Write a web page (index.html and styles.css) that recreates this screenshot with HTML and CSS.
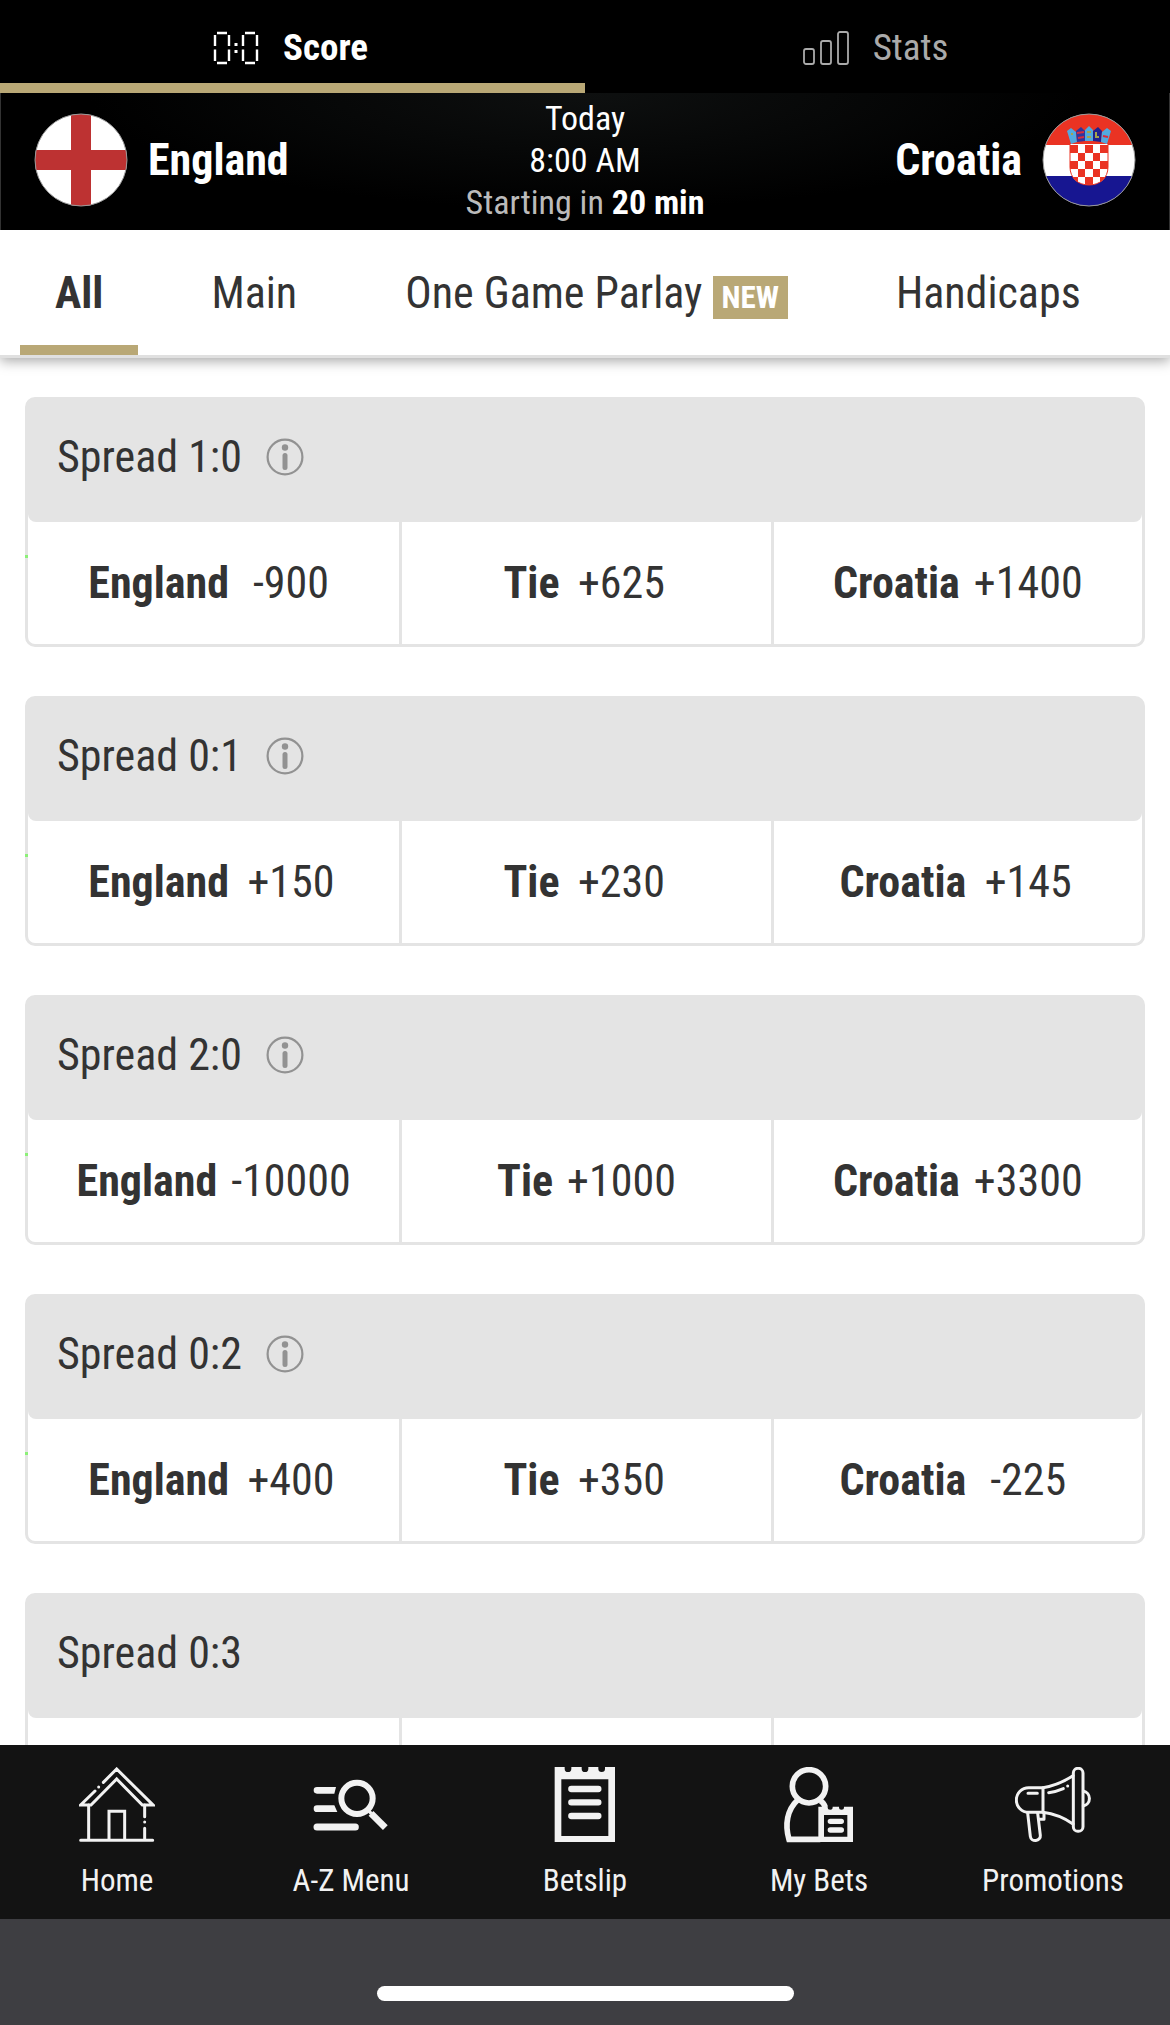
FILE: index.html
```html
<!DOCTYPE html>
<html lang="en">
<head>
    <meta charset="UTF-8">
    <meta name="viewport" content="width=device-width, initial-scale=1.0">
    <title>England - Croatia</title>
    <link rel="stylesheet" href="styles.css">
</head>
<body>
    <!-- shared icons -->
    <svg class="sprite" aria-hidden="true">
        <symbol id="icon-info" viewBox="0 0 38 38">
            <circle cx="19" cy="19" r="17.4" fill="none" stroke="#929292" stroke-width="2.2"/>
            <circle cx="19" cy="9.500" r="3.200" fill="#929292"/>
            <rect x="16.500" y="15" width="5" height="17" rx="2.500" fill="#929292"/>
        </symbol>
    </svg>

    <nav class="view-tabs">
        <button class="view-tab active">
            <svg class="view-icon" viewBox="0 0 46 34" fill="none" stroke="currentColor" stroke-width="2.4">
                <path d="M4 2H14M2 4V15M16 4V15M2 18.500V30M16 18.500V30M4 32H14"/>
                <path d="M32 2H42M30 4V15M44 4V15M30 18.500V30M44 18.500V30M32 32H42"/>
                <path d="M21.500 13.500H24.500M21.500 20.500H24.500" stroke-width="3"/>
            </svg>
            <span>Score</span>
        </button>
        <button class="view-tab">
            <svg class="view-icon" viewBox="0 0 46 34" fill="none" stroke="currentColor" stroke-width="1.8">
                <rect x="1" y="18" width="10" height="15" rx="2"/>
                <rect x="18" y="10" width="10" height="23" rx="2"/>
                <rect x="35" y="1" width="10" height="32" rx="2"/>
            </svg>
            <span>Stats</span>
        </button>
    </nav>

    <header class="match">
        <div class="team">
            <svg class="flag" viewBox="0 0 94 94">
                <clipPath id="flag-round"><circle cx="47" cy="47" r="46"/></clipPath>
                <g clip-path="url(#flag-round)">
                    <rect width="94" height="94" fill="#fff"/>
                    <path d="M37 0H57V37H94V57H57V94H37V57H0V37H37Z" fill="#bd3232"/>
                </g>
                <circle cx="47" cy="47" r="46" fill="none" stroke="#999" stroke-width="1"/>
            </svg>
            <span>England</span>
        </div>
        <div class="kickoff">
            <div>Today</div>
            <div>8:00 AM</div>
            <div class="countdown">Starting in <b>20 min</b></div>
        </div>
        <div class="team away">
            <span>Croatia</span>
            <svg class="flag" viewBox="0 0 94 94">
                <g clip-path="url(#flag-round)">
                    <rect width="94" height="94" fill="#fff"/>
                    <rect width="94" height="32" fill="#ea3323"/>
                    <rect y="63" width="94" height="31" fill="#171691"/>
                    <clipPath id="shield"><path d="M28 31H66V54C66 65 58 72 47 72S28 65 28 54Z"/></clipPath>
                    <g clip-path="url(#shield)">
                        <rect x="28" y="31" width="38" height="42" fill="#fff"/>
                        <path fill="#ea3323" d="M28 32h8v8h-8zM43 32h8v8h-8zM58 32h8v8h-8zM36 40h7v8h-7zM51 40h7v8h-7zM28 48h8v8h-8zM43 48h8v8h-8zM58 48h8v8h-8zM36 56h7v8h-7zM51 56h7v8h-7zM28 64h8v8h-8zM43 64h8v8h-8zM58 64h8v8h-8z"/>
                    </g>
                    <path d="M28 31V54C28 65 36 72 47 72S66 65 66 54V31" fill="none" stroke="#ea3323"/>
                    <path d="M25 18L29 15L34 19L35 29L29 31Z" fill="#52a9df"/>
                    <path d="M34 18L39 14L43 18V28L35 29Z" fill="#31349b"/>
                    <path d="M43 17L47 13L51 17V28H43Z" fill="#52a9df"/>
                    <path d="M51 18L56 14L60 18L59 29L51 28Z" fill="#21218e"/>
                    <path d="M60 19L65 15L69 18L65 31L59 29Z" fill="#52a9df"/>
                    <path d="M35 20L42 19M36 25L42 24M61 23L66 24" stroke="#d92a3c" stroke-width="2"/>
                    <path d="M45 19H49M45 24H49M54 19V24H57M29 21H31" stroke="#a5a34b" stroke-width="2" fill="none"/>
                </g>
                <circle cx="47" cy="47" r="46" fill="none" stroke="#999" stroke-width="1"/>
            </svg>
        </div>
    </header>

    <nav class="market-tabs">
        <button class="market-tab active">All</button>
        <button class="market-tab">Main</button>
        <button class="market-tab">One Game Parlay <span class="badge">NEW</span></button>
        <button class="market-tab">Handicaps</button>
    </nav>

    <main class="markets">
        <section class="market">
            <h2 class="market-head">Spread 1:0 <svg class="info"><use href="#icon-info"/></svg></h2>
            <div class="options">
                <button class="option"><b>England</b><span class="odds">-900</span></button>
                <button class="option"><b>Tie</b><span class="odds">+625</span></button>
                <button class="option"><b>Croatia</b><span class="odds">+1400</span></button>
            </div>
        </section>
        <section class="market">
            <h2 class="market-head">Spread 0:1 <svg class="info"><use href="#icon-info"/></svg></h2>
            <div class="options">
                <button class="option"><b>England</b><span class="odds">+150</span></button>
                <button class="option"><b>Tie</b><span class="odds">+230</span></button>
                <button class="option"><b>Croatia</b><span class="odds">+145</span></button>
            </div>
        </section>
        <section class="market">
            <h2 class="market-head">Spread 2:0 <svg class="info"><use href="#icon-info"/></svg></h2>
            <div class="options">
                <button class="option"><b>England</b><span class="odds">-10000</span></button>
                <button class="option"><b>Tie</b><span class="odds">+1000</span></button>
                <button class="option"><b>Croatia</b><span class="odds">+3300</span></button>
            </div>
        </section>
        <section class="market">
            <h2 class="market-head">Spread 0:2 <svg class="info"><use href="#icon-info"/></svg></h2>
            <div class="options">
                <button class="option"><b>England</b><span class="odds">+400</span></button>
                <button class="option"><b>Tie</b><span class="odds">+350</span></button>
                <button class="option"><b>Croatia</b><span class="odds">-225</span></button>
            </div>
        </section>
        <section class="market">
            <h2 class="market-head">Spread 0:3</h2>
            <div class="options">
                <button class="option" aria-label="England"></button>
                <button class="option" aria-label="Tie"></button>
                <button class="option" aria-label="Croatia"></button>
            </div>
        </section>
    </main>

    <nav class="bottom-nav">
        <a class="nav-item" href="#home">
            <svg class="nav-icon" viewBox="0 0 228 228" fill="none" stroke="currentColor" stroke-width="9" stroke-linecap="round">
                <path d="M73 46L113 6L222 114H190L113 36L36 114H5L48 72M59 60V60"/>
                <path d="M29 114V220M197 114V149M197 165V165M197 184V220M90 220V133H137V220M5 220H221"/>
            </svg>
            <span>Home</span>
        </a>
        <a class="nav-item" href="#menu">
            <svg class="nav-icon" viewBox="0 0 228 228" fill="none" stroke="currentColor">
                <path d="M69 60H12A10 10 0 0 0 12 80H64ZM64 115H12A10 10 0 0 0 12 135H73Z" fill="currentColor" stroke="none"/>
                <path d="M12 180H127" stroke-width="21" stroke-linecap="round"/>
                <circle cx="132" cy="94" r="47" stroke-width="18"/>
                <path d="M165 129L175 140" stroke-width="10"/>
                <path d="M174 139L217 182" stroke-width="20"/>
            </svg>
            <span>A-Z Menu</span>
        </a>
        <a class="nav-item" href="#betslip">
            <svg class="nav-icon" viewBox="0 0 228 228" fill="currentColor">
                <path fill-rule="evenodd" d="M23 0H53V5A10 10 0 0 0 73 5V0H104V5A10 10 0 0 0 124 5V0H154V5A10 10 0 0 0 174 5V0H204V225H23ZM43 37V207H184V37Z"/>
                <path d="M73 66H154M73 106H154M73 147H154" stroke="currentColor" stroke-width="19" stroke-linecap="round"/>
            </svg>
            <span>Betslip</span>
        </a>
        <a class="nav-item" href="#mybets">
            <svg class="nav-icon" viewBox="0 0 228 228" fill="none" stroke="currentColor" stroke-width="17">
                <circle cx="84" cy="58" r="50"/>
                <path d="M50 99C18 128 11 174 24 217H118M118 101Q128 107 133 121"/>
                <path fill="currentColor" stroke="none" fill-rule="evenodd" d="M112 119H140V121A7 7 0 0 0 155 121V119H174V121A7 7 0 0 0 189 121V119H216V225H112ZM129 144V209H199V144Z"/>
                <path d="M148 163H181M148 189H181" stroke-width="16" stroke-linecap="round"/>
            </svg>
            <span>My Bets</span>
        </a>
        <a class="nav-item" href="#promotions">
            <svg class="nav-icon" viewBox="0 0 228 228" fill="none" stroke="currentColor" stroke-width="9" stroke-linecap="round" stroke-linejoin="round">
                <path d="M84 62H41A37 37 0 0 0 41 136H84ZM39 79H67"/>
                <path d="M84 62Q130 55 174 26M84 136Q132 142 174 171"/>
                <rect x="175" y="4" width="29" height="189" rx="14"/>
                <path d="M205 72A23 23 0 0 1 205 117M101 77Q125 74 145 65M158 57V57"/>
                <path d="M38 138L46 208A15 14 0 0 0 76 205L68 138M71 157H87V138"/>
            </svg>
            <span>Promotions</span>
        </a>
    </nav>
    <div class="home-area"><div class="home-indicator"></div></div>
</body>
</html>
```

FILE: styles.css
```css
* {
    box-sizing: border-box;
}
body {
    margin: 0;
    height: 100vh;
    display: flex;
    flex-direction: column;
    background-color: #fff;
    color: #333;
    font-family: "Roboto Condensed", Roboto, sans-serif;
    font-size: 44px;
}
button {
    margin: 0;
    padding: 0;
    border: 0;
    background: none;
    color: inherit;
    font: inherit;
}
.sprite {
    display: none;
}

/* score / stats switch */
.view-tabs {
    display: grid;
    grid-template-columns: 1fr 1fr;
    flex: none;
    background-color: #000;
}
.view-tab {
    display: flex;
    justify-content: center;
    align-items: center;
    gap: 24px;
    height: 93px;
    padding: 12px 4px 0 0;
    border-bottom: 10px solid transparent;
    color: #aaa;
    font-size: 37px;
}
.view-tab.active {
    border-color: #b9a876;
    color: #fff;
    font-weight: bold;
}
.view-icon {
    width: 46px;
    height: 34px;
}

/* match header */
.match {
    display: grid;
    grid-template-columns: 1fr auto 1fr;
    align-items: center;
    flex: none;
    height: 137px;
    padding: 0 33px 4px;
    border: solid #333;
    border-width: 0 1px;
    background: radial-gradient(ellipse at 50% 0, #0e1010, #000 60%);
    color: #fff;
}
.team {
    display: flex;
    align-items: center;
    gap: 20px;
    font-weight: bold;
}
.team.away {
    justify-content: flex-end;
}
.flag {
    width: 94px;
    height: 94px;
}
.kickoff {
    font-size: 34px;
    line-height: 42px;
    text-align: center;
}
.countdown {
    color: #bbb;
}
.countdown b {
    color: #fff;
}

/* market filter */
.market-tabs {
    display: flex;
    gap: 38px;
    flex: none;
    height: 128px;
    padding-left: 20px;
    border-bottom: 3px solid #e0e0e0;
    box-shadow: 0 3px 12px rgba(0, 0, 0, 0.35);
    white-space: nowrap;
}
.market-tab {
    padding: 10px 35px 0;
    border-bottom: 10px solid transparent;
}
.market-tab.active {
    border-color: #b9a876;
    font-weight: bold;
}
.badge {
    display: inline-block;
    padding: 0 9px;
    background-color: #b9a876;
    color: #fff;
    font-size: 31px;
    font-weight: bold;
    line-height: 43px;
}

/* market cards */
.markets {
    display: flex;
    flex-direction: column;
    gap: 49px;
    flex: 1;
    min-height: 0;
    padding: 39px 25px 0;
    overflow: hidden;
}
.market {
    position: relative;
    flex: none;
    border: 3px solid #e4e4e4;
    border-radius: 10px;
}
.market::before {
    content: "";
    position: absolute;
    left: -3px;
    top: 155px;
    width: 3px;
    height: 3px;
    background-color: #8cf078;
}
.market-head {
    display: flex;
    align-items: center;
    gap: 24px;
    height: 122px;
    margin: 0;
    padding: 0 29px 8px;
    border-radius: 0 0 8px 8px;
    background-color: #e4e4e4;
    font-size: 44px;
    font-weight: normal;
}
.info {
    width: 38px;
    height: 38px;
}
.options {
    display: grid;
    grid-template-columns: 1fr 1fr 1fr;
    height: 122px;
}
.option {
    display: flex;
    justify-content: center;
    align-items: center;
    gap: 14px;
}
.option + .option {
    border-left: 3px solid #e4e4e4;
}
.odds {
    min-width: 96px;
    text-align: center;
}

/* bottom bar */
.bottom-nav {
    display: grid;
    grid-template-columns: repeat(5, 1fr);
    flex: none;
    height: 174px;
    background-color: #131313;
}
.nav-item {
    display: flex;
    flex-direction: column;
    align-items: center;
    gap: 19px;
    padding-top: 22px;
    color: #f2f2f2;
    font-size: 31px;
    line-height: 38px;
    text-decoration: none;
}
.nav-icon {
    width: 76px;
    height: 76px;
}
.home-area {
    display: flex;
    justify-content: center;
    flex: none;
    height: 106px;
    padding-top: 67px;
    background-color: #3e3e42;
}
.home-indicator {
    width: 36%;
    max-width: 417px;
    height: 15px;
    border-radius: 8px;
    background-color: #fff;
}
```
